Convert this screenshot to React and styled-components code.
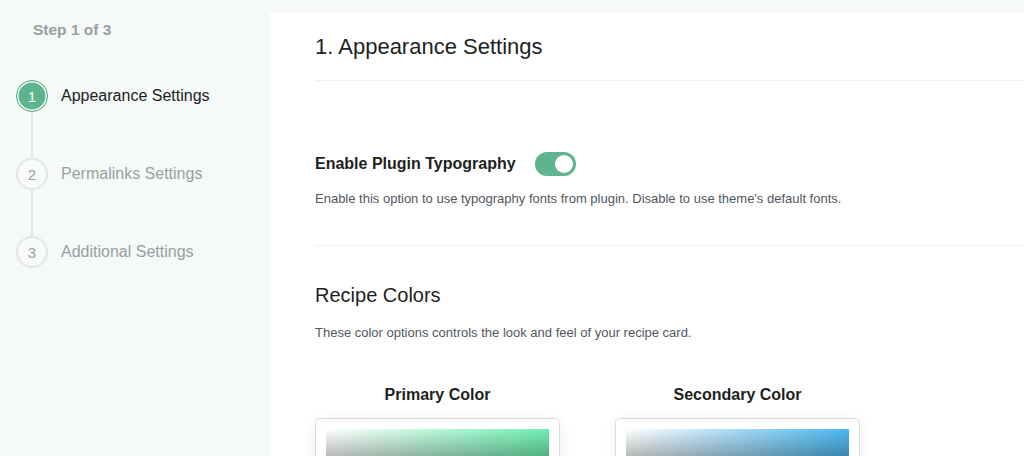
import React from "react";
import styled, { createGlobalStyle } from "styled-components";

const GlobalStyle = createGlobalStyle`
  html, body {
    margin: 0;
    padding: 0;
    background: #f5f9f8;
    font-family: "Liberation Sans", Arial, sans-serif;
    overflow: hidden;
  }
`;

const Layout = styled.div`
  display: flex;
  width: 1024px;
  height: 456px;
  background: #f5f9f8;
  overflow: hidden;
`;

const Sidebar = styled.aside`
  width: 270px;
  flex-shrink: 0;
  padding: 21px 0 0 33px;
  box-sizing: border-box;
`;

const StepCount = styled.div`
  font-size: 15.5px;
  font-weight: bold;
  color: #9a9ea0;
  line-height: 18px;
`;

const Steps = styled.div`
  display: flex;
  flex-direction: column;
  margin-top: 41px;
  margin-left: -17px;
`;

const Step = styled.div`
  display: flex;
  align-items: center;
  gap: 13px;
  height: 32px;
`;

const Circle = styled.div`
  width: 32px;
  height: 32px;
  box-sizing: border-box;
  border-radius: 50%;
  display: flex;
  align-items: center;
  justify-content: center;
  font-size: 15px;
  ${({ active }) =>
    active
      ? `
    background: #5db48e;
    color: #fff;
    border: 1px solid #5db48e;
    box-shadow: inset 0 0 0 1.5px #fff;
  `
      : `
    background: #f8fbfa;
    color: #9a9ea0;
    border: 2px solid #e3e6e7;
  `}
`;

const StepLabel = styled.span`
  font-size: 16px;
  color: ${({ active }) => (active ? "#222" : "#9a9ea0")};
`;

const Connector = styled.div`
  width: 2px;
  height: 46px;
  margin-left: 15px;
  background: #e3e6e7;
`;

const Main = styled.main`
  flex: 1;
  margin-top: 13px;
  background: #fff;
  display: flex;
  flex-direction: column;
`;

const Progress = styled.div`
  height: 2px;
  width: 300px;
  background: #c5e6dc;
`;

const Content = styled.div`
  padding-left: 45px;
`;

const PageTitle = styled.h1`
  margin: 0;
  font-size: 22px;
  font-weight: normal;
  color: #1d1f21;
  line-height: 26px;
  padding: 21px 0 20px;
  border-bottom: 1px solid #efefef;
`;

const Section = styled.section`
  padding: ${({ pad }) => pad};
  border-bottom: ${({ last }) => (last ? "none" : "1px solid #efefef")};
`;

const OptionRow = styled.div`
  display: flex;
  align-items: center;
  gap: 19px;
`;

const OptionLabel = styled.span`
  font-size: 16px;
  font-weight: bold;
  color: #1d1f21;
`;

const Toggle = styled.div`
  width: 41px;
  height: 24px;
  border-radius: 12px;
  background: #5db48e;
  display: flex;
  align-items: center;
  justify-content: flex-end;
  padding: 0 3px;
  box-sizing: border-box;

  &::after {
    content: "";
    width: 18px;
    height: 18px;
    border-radius: 50%;
    background: #fff;
  }
`;

const Help = styled.p`
  margin: ${({ gap }) => gap} 0 0;
  font-size: 13px;
  color: #50575e;
  line-height: 16px;
`;

const SectionTitle = styled.h2`
  margin: 0;
  font-size: 20px;
  font-weight: normal;
  color: #1d1f21;
  line-height: 24px;
`;

const Pickers = styled.div`
  display: flex;
  gap: 55px;
  margin-top: 45px;
`;

const Picker = styled.div`
  width: 245px;
  display: flex;
  flex-direction: column;
  align-items: center;
`;

const PickerLabel = styled.div`
  font-size: 16px;
  font-weight: bold;
  color: #1d1f21;
  line-height: 18px;
`;

const PickerCard = styled.div`
  margin-top: 14px;
  width: 100%;
  height: 120px;
  box-sizing: border-box;
  padding: 10px;
  border: 1px solid #dcdcdc;
  border-radius: 5px;
  background: #fff;
  box-shadow: 0 4px 14px rgba(0, 0, 0, 0.08);
`;

const Saturation = styled.div`
  height: 100px;
  background: linear-gradient(to bottom, rgba(0, 0, 0, 0), #000),
    linear-gradient(to right, #fff, ${({ hue }) => hue});
`;

const steps = ["Appearance Settings", "Permalinks Settings", "Additional Settings"];

export default function App() {
  return (
    <>
      <GlobalStyle />
      <Layout>
        <Sidebar>
          <StepCount>Step 1 of 3</StepCount>
          <Steps>
            {steps.map((s, i) => (
              <React.Fragment key={s}>
                {i > 0 && <Connector />}
                <Step>
                  <Circle active={i === 0}>{i + 1}</Circle>
                  <StepLabel active={i === 0}>{s}</StepLabel>
                </Step>
              </React.Fragment>
            ))}
          </Steps>
        </Sidebar>
        <Main>
          <Progress />
          <Content>
            <PageTitle>1. Appearance Settings</PageTitle>
            <Section pad="71px 0 38px">
              <OptionRow>
                <OptionLabel>Enable Plugin Typography</OptionLabel>
                <Toggle />
              </OptionRow>
              <Help gap="15px">
                Enable this option to use typography fonts from plugin. Disable to use theme's default fonts.
              </Help>
            </Section>
            <Section pad="37px 0 0" last>
              <SectionTitle>Recipe Colors</SectionTitle>
              <Help gap="18px">
                These color options controls the look and feel of your recipe card.
              </Help>
              <Pickers>
                <Picker>
                  <PickerLabel>Primary Color</PickerLabel>
                  <PickerCard>
                    <Saturation hue="#6ef0b0" />
                  </PickerCard>
                </Picker>
                <Picker>
                  <PickerLabel>Secondary Color</PickerLabel>
                  <PickerCard>
                    <Saturation hue="#4cb8f0" />
                  </PickerCard>
                </Picker>
              </Pickers>
            </Section>
          </Content>
        </Main>
      </Layout>
    </>
  );
}
